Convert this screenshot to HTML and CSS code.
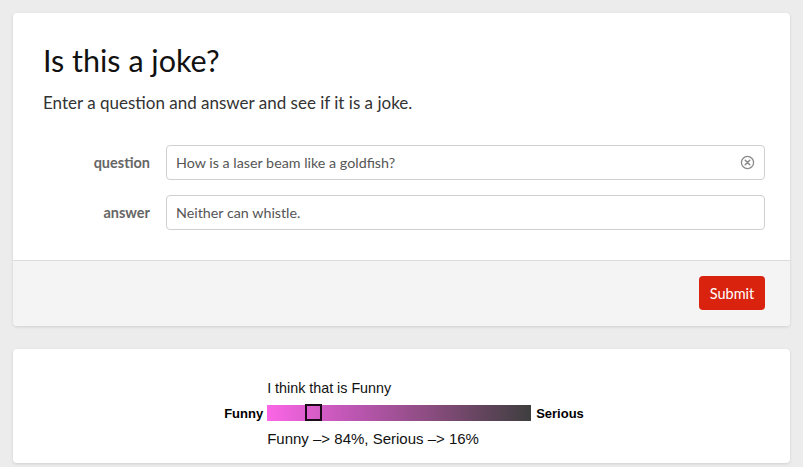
FILE: index.html
```html
<!DOCTYPE html>
<html>
<head>
<meta charset="utf-8">
<link rel="stylesheet" href="styles.css">
</head>
<body>
<div class="page">
  <div class="card">
    <div class="card-body">
      <h1 class="title">Is this a joke?</h1>
      <p class="subtitle">Enter a question and answer and see if it is a joke.</p>
      <div class="form">
        <label class="label">question</label>
        <div class="input has-clear">
          <span class="value">How is a laser beam like a goldfish?</span>
          <svg class="clear" width="15" height="15" viewBox="0 0 16 16">
            <circle cx="8" cy="8" r="6.5" fill="none" stroke="#8a8a8a" stroke-width="1.4"/>
            <path d="M5.6 5.6 L10.4 10.4 M10.4 5.6 L5.6 10.4" stroke="#8a8a8a" stroke-width="1.6" stroke-linecap="round"/>
          </svg>
        </div>
        <label class="label">answer</label>
        <div class="input">
          <span class="value">Neither can whistle.</span>
        </div>
      </div>
    </div>
    <div class="card-footer">
      <button class="submit">Submit</button>
    </div>
  </div>

  <div class="card result">
    <div class="meter">
      <div></div>
      <div class="caption">I think that is Funny</div>
      <div></div>
      <div class="end left">Funny</div>
      <div class="bar"><span class="marker" style="left: 38px"></span></div>
      <div class="end right">Serious</div>
      <div></div>
      <div class="caption lower">Funny –&gt; 84%, Serious –&gt; 16%</div>
      <div></div>
    </div>
  </div>
</div>
</body>
</html>
```

FILE: styles.css
```css
* { box-sizing: border-box; }
html, body { margin: 0; padding: 0; }
body {
  background: #ececec;
  font-family: "Lato", "Open Sans", sans-serif;
  width: 803px;
  height: 467px;
  overflow: hidden;
}
.page {
  padding: 13px 13px 0 13px;
  display: flex;
  flex-direction: column;
  gap: 23px;
}
.card {
  background: #fff;
  border-radius: 4px;
  box-shadow: 0 1px 3px rgba(0,0,0,0.12);
  overflow: hidden;
}
.card-body {
  padding: 27px 25px 30px 30px;
  height: 247px;
}
.title {
  margin: 0;
  font-size: 30.5px;
  font-weight: 400;
  color: #111;
  line-height: 40px;
}
.subtitle {
  margin: 11px 0 0 0;
  font-size: 17px;
  color: #333;
  line-height: 24px;
}
.form {
  margin-top: 30px;
  display: grid;
  grid-template-columns: 107px 1fr;
  column-gap: 16px;
  row-gap: 15px;
  align-items: center;
}
.label {
  text-align: right;
  font-weight: 700;
  font-size: 14.5px;
  color: #666;
}
.input {
  height: 35px;
  border: 1px solid #cfcfcf;
  border-radius: 4px;
  display: flex;
  align-items: center;
  padding: 0 10px 0 9px;
  font-size: 14.3px;
  color: #555;
}
.input .value { flex: 1; }
.clear { flex: none; margin-right: -1px; }
.card-footer {
  background: #f4f4f4;
  border-top: 1px solid #dcdcdc;
  height: 66px;
  padding: 15px 25px;
  display: flex;
  justify-content: flex-end;
  align-items: center;
}
.submit {
  background: #d9230f;
  color: #fff;
  border: none;
  border-radius: 4px;
  height: 34px;
  width: 66px;
  margin-top: -1px;
  font-family: "Lato", "Open Sans", sans-serif;
  font-size: 14.5px;
  padding: 0;
}
.result {
  height: 114px;
  display: flex;
  justify-content: center;
}
.meter {
  margin-top: 28px;
  margin-left: 5px;
  display: grid;
  grid-template-columns: auto 264px auto;
  grid-template-rows: 21px 16px 20px;
  row-gap: 7px;
  align-items: center;
  column-gap: 4px;
  font-family: "Liberation Sans", Arial, sans-serif;
  color: #111;
  height: 71px;
}
.caption {
  font-size: 14.3px;
  white-space: nowrap;
}
.caption.lower { font-size: 15px; }
.end {
  font-weight: 700;
  font-size: 13px;
  color: #000;
}
.end.right { margin-left: 1px; }
.bar {
  position: relative;
  height: 16px;
  background: linear-gradient(to right, #fb66e6 0%, #c157b6 30%, #8e4d83 60%, #3e3e3e 100%);
}
.marker {
  position: absolute;
  top: -1px;
  width: 17px;
  height: 17px;
  border: 2px solid #1a0a1a;
}
```
